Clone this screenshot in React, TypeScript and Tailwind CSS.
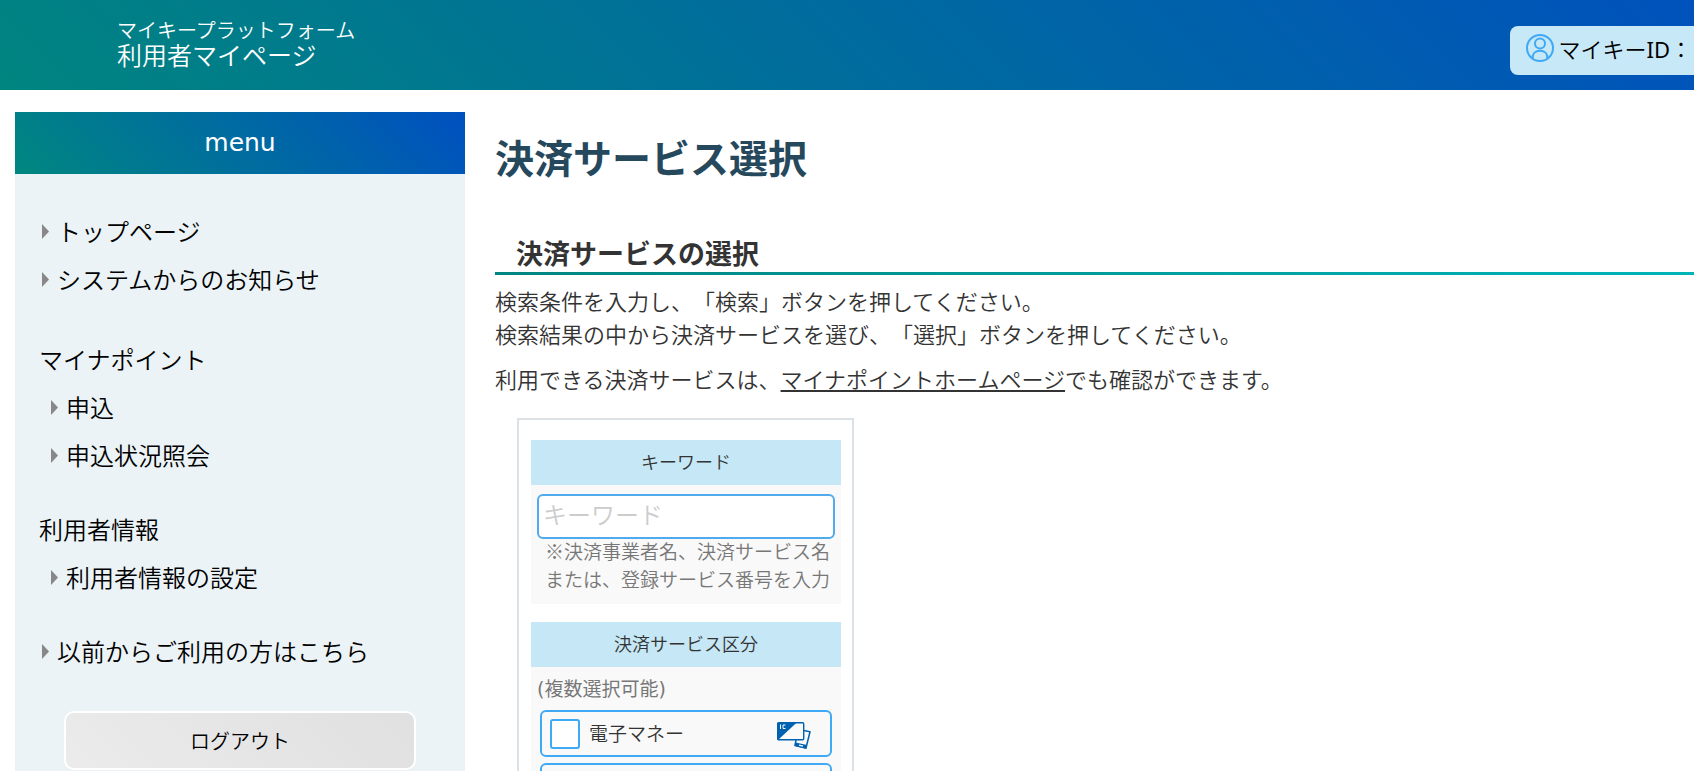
import type { ReactNode } from 'react';

interface MenuLinkProps {
  label: string;
  sub?: boolean;
}

function MenuLink({ label, sub = false }: MenuLinkProps) {
  return (
    <li className={sub ? 'pl-9' : 'pl-[27px]'}>
      <a href="#" className="flex h-12 items-center gap-2">
        <svg viewBox="0 0 7 15" className="h-[15px] w-[7px] shrink-0 fill-[#888888]" aria-hidden="true">
          <path d="M0 0L7 7.5L0 15Z" />
        </svg>
        <span>{label}</span>
      </a>
    </li>
  );
}

function MenuHeading({ label }: { label: string }) {
  return <h2 className="flex h-12 items-center pl-6">{label}</h2>;
}

function UserIcon() {
  return (
    <svg viewBox="0 0 28 28" className="mb-1 size-7 shrink-0" fill="none" stroke="#3fa9f5" strokeWidth="2" aria-hidden="true">
      <circle cx="14" cy="14" r="13" />
      <circle cx="14" cy="9.5" r="5" />
      <path d="M6.5 24.2C6.5 19.5 9.5 16.8 14 16.8S21.5 19.5 21.5 24.2" />
    </svg>
  );
}

function EmoneyIcon() {
  return (
    <svg viewBox="0 0 34 28" className="mt-1 h-7 w-[34px] shrink-0" fill="none" aria-hidden="true">
      <path d="M27 8.5L33 9.8L29 26L18 23.5L19 18" stroke="#0061b0" strokeWidth="1.5" />
      <path d="M18.6 20.5L30 23L29 26.7L17.7 24Z" fill="#0061b0" />
      <path d="M22 23.2L26 24.2" stroke="#fff" strokeWidth="1.2" />
      <rect x="0.7" y="0.7" width="26" height="17" rx="1" fill="#fafafa" stroke="#0061b0" strokeWidth="1.4" />
      <path d="M0.7 0.7H19.5L1.5 17.5H0.7Z" fill="#0061b0" />
      <path d="M3.5 2.5V7M8.5 3H6V6.5H8.5" stroke="#fff" strokeWidth="1" />
    </svg>
  );
}

function SearchGroup({ title, children }: { title: string; children: ReactNode }) {
  return (
    <section className="mb-[18px] bg-[#f9f9f9]">
      <h3 className="flex h-[45px] items-center justify-center bg-[#c5e7f6] pb-1 text-lg text-[#333333]">{title}</h3>
      {children}
    </section>
  );
}

function CategoryOption({ name, children }: { name: string; children?: ReactNode }) {
  return (
    <label className="mx-[9px] mb-1.5 flex h-[47px] items-center rounded-md border-2 border-[#3fa9f5] pr-[19px] pl-2 text-[19px] text-[#333333]">
      <input
        type="checkbox"
        name="category"
        aria-label={name}
        className="mr-[9px] size-[30px] shrink-0 appearance-none rounded-[3px] border-2 border-[#3fa9f5] bg-white checked:bg-[#3fa9f5]"
      />
      {children}
    </label>
  );
}

export default function App() {
  return (
    <div className="h-screen overflow-hidden bg-white font-['Noto_Sans_CJK_JP',sans-serif] font-[350] text-black [text-spacing-trim:space-all]">
      <header className="flex h-[90px] items-center justify-between bg-[linear-gradient(45deg,#008580,#0052bc)]">
        <div className="pb-1.5 pl-[117px] text-white">
          <p className="text-xl leading-[25px]">マイキープラットフォーム</p>
          <p className="text-[25px] leading-[25px]">利用者マイページ</p>
        </div>
        <div className="mt-[11px] flex h-[49px] items-center gap-1 rounded-l-lg bg-[#c7e8f7] pr-0.5 pb-0.5 pl-4 text-[22px] whitespace-nowrap">
          <UserIcon />
          <span className="pb-0.5">
            マイキー<span className="font-['Noto_Sans',sans-serif] font-normal">ID</span>：
          </span>
        </div>
      </header>

      <div className="flex items-start gap-[30px] pt-[22px] pl-[15px]">
        <aside className="w-[450px] shrink-0 bg-[#ebf3f6] pb-10 text-2xl">
          <p className="flex h-[62px] items-center justify-center bg-[linear-gradient(45deg,#008780,#0050c0)] font-['DejaVu_Sans',sans-serif] text-[25px] font-normal text-white">
            menu
          </p>
          <nav className="pt-[33px]">
            <ul>
              <MenuLink label="トップページ" />
              <MenuLink label="システムからのお知らせ" />
            </ul>
            <div className="mt-8">
              <MenuHeading label="マイナポイント" />
              <ul>
                <MenuLink label="申込" sub />
                <MenuLink label="申込状況照会" sub />
              </ul>
            </div>
            <div className="mt-[26px]">
              <MenuHeading label="利用者情報" />
              <ul>
                <MenuLink label="利用者情報の設定" sub />
              </ul>
            </div>
            <ul className="mt-[26px]">
              <MenuLink label="以前からご利用の方はこちら" />
            </ul>
          </nav>
          <button
            type="button"
            className="mx-auto mt-9 block h-[59px] w-[352px] rounded-[10px] border-2 border-white bg-[linear-gradient(45deg,#ebebeb,#e0e0e0)] text-xl"
          >
            ログアウト
          </button>
        </aside>

        <main className="min-w-0 flex-1 text-[22px] leading-[33px] text-[#333333]">
          <h1 className="pt-3.5 text-[39px] leading-[60px] font-bold text-[#25485c]">決済サービス選択</h1>
          <h2 className="mt-12 pl-[21px] text-[27px] leading-[38px] font-bold">決済サービスの選択</h2>
          <div className="h-[3px] bg-linear-to-r from-[#008580] to-[#00b4b8]" />
          <p className="mt-[9px]">
            検索条件を入力し、「検索」ボタンを押してください。
            <br />
            検索結果の中から決済サービスを選び、「選択」ボタンを押してください。
          </p>
          <p className="mt-3">
            利用できる決済サービスは、
            <a href="#" className="underline decoration-2 underline-offset-2 [text-decoration-skip-ink:none]">
              マイナポイントホームページ
            </a>
            でも確認ができます。
          </p>

          <form className="mt-[23px] ml-[22px] w-[337px] border-2 border-[#dce1e6] pt-5 pr-[11px] pl-3">
            <SearchGroup title="キーワード">
              <div className="px-1.5 pt-[9px] pb-[11px]">
                <input
                  type="text"
                  aria-label="キーワード"
                  placeholder="キーワード"
                  className="block h-[45px] w-full rounded-md border-2 border-[#4fabee] bg-white px-1 pb-1.5 text-2xl placeholder:text-[#cccccc]"
                />
                <p className="-mt-0.5 pl-2 text-[19px] leading-7 whitespace-nowrap text-[#777777]">
                  ※決済事業者名、決済サービス名
                  <br />
                  または、登録サービス番号を入力
                </p>
              </div>
            </SearchGroup>
            <SearchGroup title="決済サービス区分">
              <p className="px-1.5 pt-2 pb-[7px] font-['DejaVu_Sans','Noto_Sans_CJK_JP',sans-serif] text-[19px] leading-7 font-normal text-[#777777]">
                (複数選択可能)
              </p>
              <CategoryOption name="電子マネー">
                <span className="flex-1 pb-0.5">電子マネー</span>
                <EmoneyIcon />
              </CategoryOption>
              <CategoryOption name="プリペイドカード" />
            </SearchGroup>
          </form>
        </main>
      </div>
    </div>
  );
}
